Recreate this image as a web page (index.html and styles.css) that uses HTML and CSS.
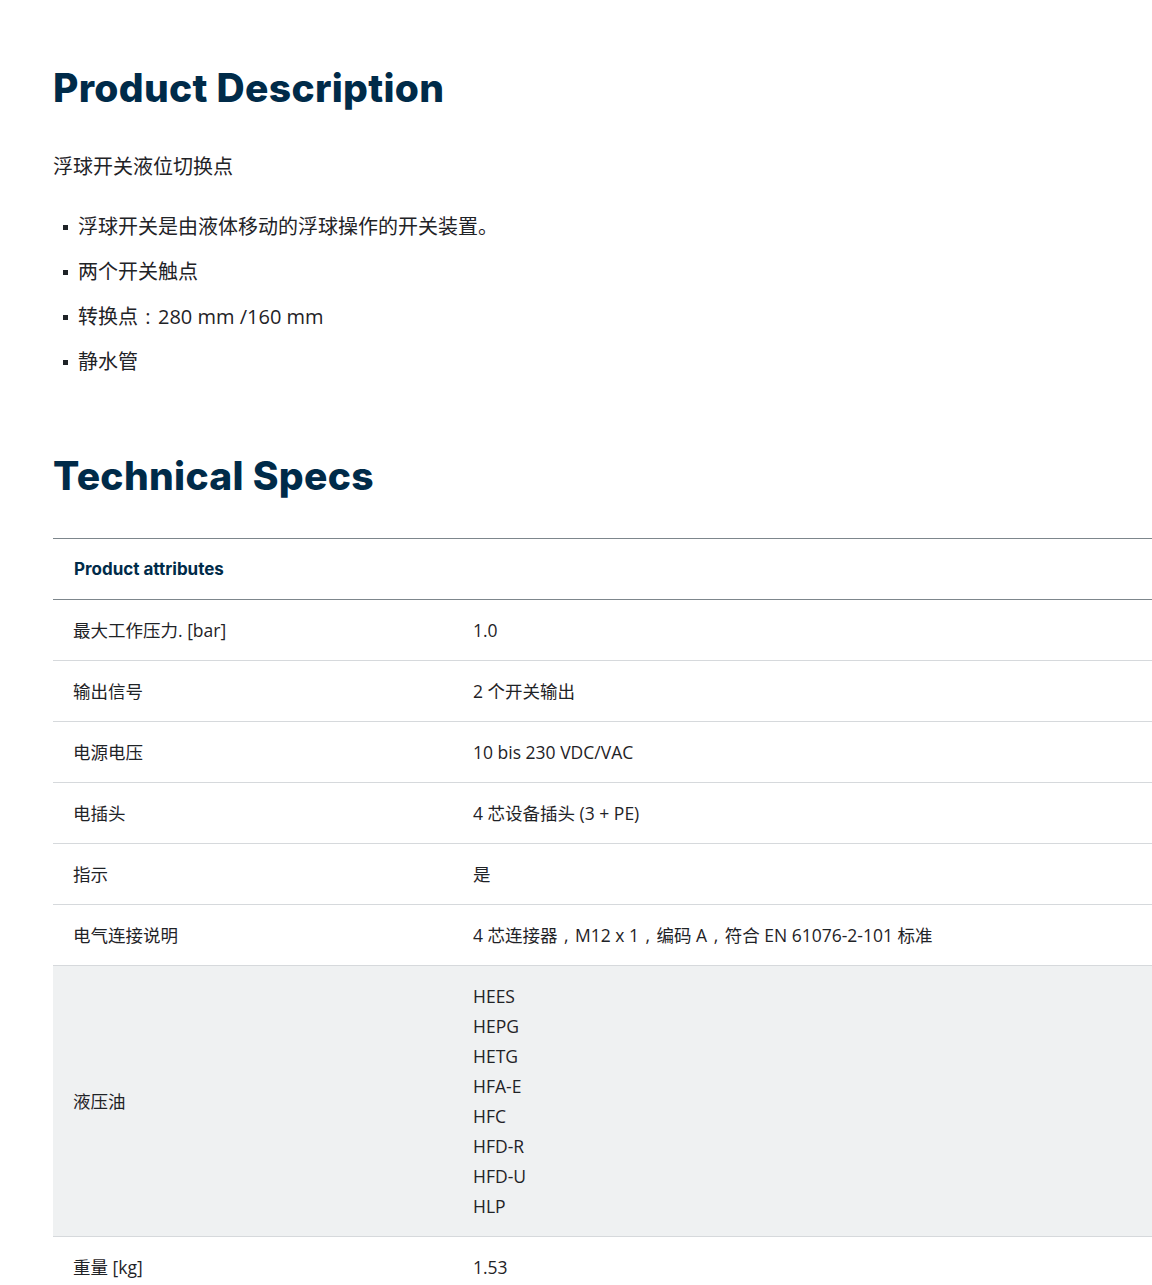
FILE: index.html
```html
<!DOCTYPE html>
<html lang="zh">
<head>
<meta charset="utf-8">
<link rel="stylesheet" href="styles.css">
</head>
<body>
<main class="page">
  <h2 class="title">Product Description</h2>
  <p class="lead">浮球开关液位切换点</p>
  <ul class="bullets">
    <li>浮球开关是由液体移动的浮球操作的开关装置。</li>
    <li>两个开关触点</li>
    <li>转换点<span class="punct">:</span>280 mm /160 mm</li>
    <li>静水管</li>
  </ul>
  <h2 class="title title-specs">Technical Specs</h2>
  <table class="specs">
    <thead>
      <tr><th colspan="2">Product attributes</th></tr>
    </thead>
    <tbody>
      <tr><td class="key">最大工作压力. [bar]</td><td>1.0</td></tr>
      <tr><td class="key">输出信号</td><td>2 个开关输出</td></tr>
      <tr><td class="key">电源电压</td><td>10 bis 230 VDC/VAC</td></tr>
      <tr><td class="key">电插头</td><td>4 芯设备插头 (3 + PE)</td></tr>
      <tr><td class="key">指示</td><td>是</td></tr>
      <tr><td class="key">电气连接说明</td><td>4 芯连接器<span class="punct">,</span>M12 x 1<span class="punct">,</span>编码 A<span class="punct">,</span>符合 EN 61076-2-101 标准</td></tr>
      <tr class="shaded"><td class="key">液压油</td><td>HEES<br>HEPG<br>HETG<br>HFA-E<br>HFC<br>HFD-R<br>HFD-U<br>HLP</td></tr>
      <tr><td class="key">重量 [kg]</td><td>1.53</td></tr>
    </tbody>
  </table>
</main>
</body>
</html>
```

FILE: styles.css
```css
html, body {
  margin: 0;
  padding: 0;
  background: #ffffff;
  overflow: hidden;
}

body {
  font-family: "Open Sans", "Noto Sans CJK SC", sans-serif;
  color: #1f2327;
}

.page {
  padding: 56px 0 0 53px;
}

.title {
  margin: 0;
  font-family: Inter, "Noto Sans CJK SC", sans-serif;
  font-weight: 800;
  font-size: 39px;
  line-height: 64px;
  color: #002b49;
  letter-spacing: 0.3px;
}

.lead {
  margin: 32px 0 0;
  font-size: 20px;
  line-height: 30px;
}

.bullets {
  list-style: none;
  margin: 30px 0 0;
  padding: 0;
}

.bullets li {
  position: relative;
  padding-left: 25px;
  font-size: 20px;
  line-height: 30px;
  margin-bottom: 15px;
}

.bullets li::before {
  content: "";
  position: absolute;
  left: 10px;
  top: 13px;
  width: 5px;
  height: 5px;
  background: #1f2327;
}

.punct {
  display: inline-block;
  width: 1em;
  text-align: center;
}

.title-specs {
  margin-top: 67px;
}

.specs {
  margin-top: 30px;
  width: 1120px;
  border-collapse: collapse;
  font-size: 17.5px;
  line-height: 30px;
  font-family: "Open Sans", "Noto Sans CJK SC", sans-serif;
}

.specs th {
  text-align: left;
  padding: 15px 20px 15px 21px;
  font-family: Inter, "Noto Sans CJK SC", sans-serif;
  font-weight: 700;
  font-size: 17px;
  color: #002b49;
  border-top: 1px solid #7d868c;
  border-bottom: 1px solid #7d868c;
}

.specs td {
  padding: 15px 20px;
  vertical-align: middle;
  border-bottom: 1px solid #d6d9dc;
}

.specs td.key {
  width: 360px;
}

.specs tr.shaded td {
  background: #eff1f2;
}
```
